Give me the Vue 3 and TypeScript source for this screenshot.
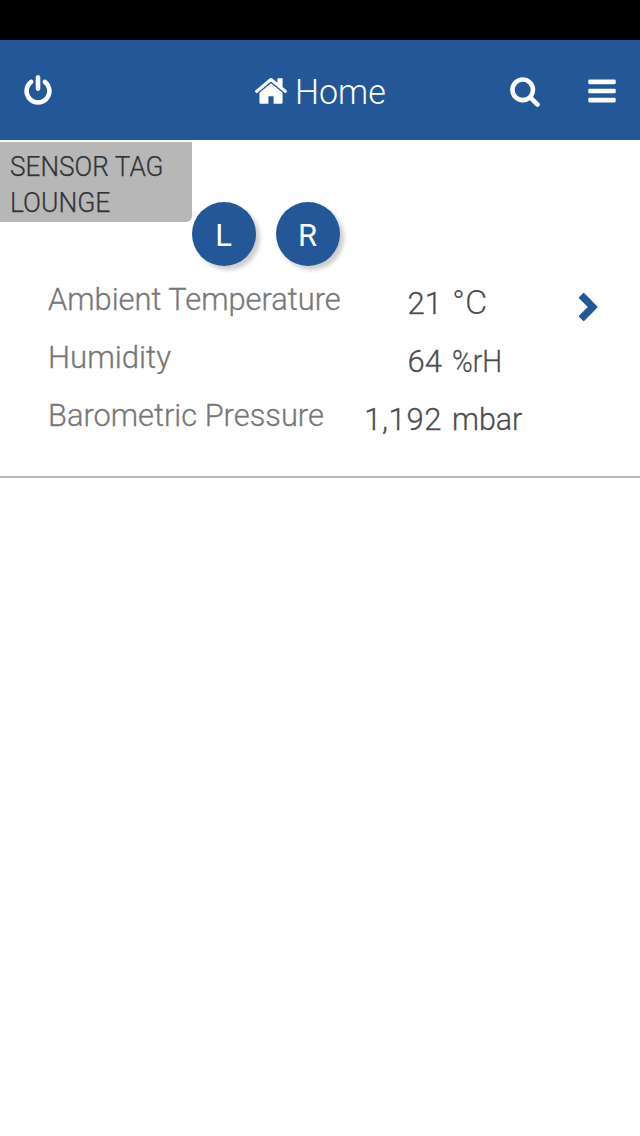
<script setup lang="ts">
interface Reading {
  id: string
  label: string
  value: string
  unit: string
}

const readings: Reading[] = [
  { id: 'temperature', label: 'Ambient Temperature', value: '21', unit: '°C' },
  { id: 'humidity', label: 'Humidity', value: '64', unit: '%rH' },
  { id: 'pressure', label: 'Barometric Pressure', value: '1,192', unit: 'mbar' },
]
const keys: string[] = ['L', 'R']
</script>

<template>
  <div class="screen">
    <div class="statusbar"></div>
    <header class="navbar">
      <svg class="icon power" viewBox="0 0 1792 1792"><path d="M1664 896q0 156-61 298t-164 245-245 164-298 61-298-61-245-164-164-245-61-298q0-182 80.500-343t226.500-270q43-32 95.500-25t83.500 50q32 42 24.500 94.500t-49.500 84.500q-98 74-151.500 181t-53.500 228q0 104 40.500 198.500t109.500 163.500 163.500 109.500 198.500 40.500 198.500-40.500 163.500-109.500 109.500-163.500 40.500-198.500q0-121-53.500-228t-151.500-181q-42-32-49.500-84.500t24.500-94.500q31-43 84-50t95 25q146 109 226.500 270t80.500 343zm-640-768v640q0 52-38 90t-90 38-90-38-38-90v-640q0-52 38-90t90-38 90 38 38 90z" /></svg>
      <h1 class="title">
        <svg class="house" viewBox="0 0 1792 1792"><path d="M1472 992v480q0 26-19 45t-45 19h-384v-384h-256v384h-384q-26 0-45-19t-19-45v-480q0-1 .5-3t.5-3l575-474 575 474q1 2 1 6zm223-69l-62 74q-8 9-21 11h-3q-13 0-21-7l-692-577-692 577q-12 8-24 7-13-2-21-11l-62-74q-8-10-7-23.500t11-21.500l719-599q32-26 76-26t76 26l244 204v-195q0-14 9-23t23-9h192q14 0 23 9t9 23v408l219 182q10 8 11 21.500t-7 23.500z" /></svg>
        <span>Home</span>
      </h1>
      <div class="actions">
        <svg class="icon" viewBox="0 0 1792 1792"><path d="M1216 832q0-185-131.500-316.500t-316.500-131.500-316.500 131.500-131.500 316.500 131.500 316.500 316.500 131.500 316.500-131.500 131.500-316.500zm512 832q0 52-38 90t-90 38q-54 0-90-38l-343-342q-179 124-399 124-143 0-273.500-55.500t-225-150-150-225-55.500-273.500 55.500-273.500 150-225 225-150 273.500-55.500 273.500 55.500 225 150 150 225 55.500 273.500q0 220-124 399l343 343q37 37 37 90z" /></svg>
        <svg class="icon" viewBox="0 0 1792 1792">
          <rect x="128" y="256" width="1536" height="256" rx="64" />
          <rect x="128" y="768" width="1536" height="256" rx="64" />
          <rect x="128" y="1280" width="1536" height="256" rx="64" />
        </svg>
      </div>
    </header>
    <main class="card">
      <div class="top">
        <div class="tag"><span class="sensor">SENSOR TAG</span><span class="lounge">LOUNGE</span></div>
        <div class="keys">
          <span v-for="key in keys" :key="key" class="key">{{ key }}</span>
        </div>
      </div>
      <div class="body">
        <div class="readings">
          <div v-for="r in readings" :key="r.id" class="row" :class="r.id">
            <span class="label"><span class="fit">{{ r.label }}</span></span>
            <span class="value">{{ r.value }}</span>
            <span class="unit"><span class="fit">{{ r.unit }}</span></span>
          </div>
        </div>
        <svg class="chevron" viewBox="0 0 20 30"><path d="M1.200 5 5 1.200Q5.700 .5 6.400 1.200L19.200 14.300Q19.900 15 19.200 15.700L6.400 28.800Q5.700 29.500 5 28.800L1.200 25Q.5 24.300 1.200 23.600L9.800 15 1.200 6.400Q.5 5.700 1.200 5Z" /></svg>
      </div>
    </main>
  </div>
</template>

<style>
body {
  background: #fff;
}
</style>

<style scoped>
.screen {
  width: 640px;
  height: 1136px;
  overflow: hidden;
  background: #fff;
  font-family: Roboto, "Liberation Sans", sans-serif;
  font-weight: 300;
}
.statusbar {
  height: 40px;
  background: #000;
}
.navbar {
  box-sizing: border-box;
  height: 100px;
  padding: 0 22px;
  display: grid;
  grid-template-columns: 231px 1fr 109px;
  align-items: start;
  background: #235797;
  color: #fff;
}
.icon {
  width: 32px;
  height: 32px;
  fill: #fff;
  overflow: visible;
}
.power {
  margin-top: 35px;
}
.title {
  margin: 33px 0 0;
  display: flex;
  font-size: 35px;
  line-height: 40px;
  font-weight: 300;
}
.title span {
  margin-left: 6px;
  transform: scaleX(0.97);
  transform-origin: left;
}
.house {
  width: 36px;
  height: 36px;
  fill: #fff;
}
.actions {
  margin-top: 35px;
  display: flex;
  justify-content: space-between;
}
.card {
  box-sizing: border-box;
  height: 338px;
  padding-top: 2px;
  border-bottom: 2px solid #b7b7b7;
}
.top {
  display: flex;
  height: 124px;
}
.tag {
  box-sizing: border-box;
  display: flex;
  flex-direction: column;
  align-items: flex-start;
  width: 192px;
  height: 80px;
  padding: 7px 0 0 10px;
  border-bottom-right-radius: 6px;
  background: #b7b7b7;
  color: #333;
  font-size: 28px;
  line-height: 36px;
  -webkit-text-stroke: 0.25px currentColor;
}
.sensor {
  transform: scaleX(0.935);
  transform-origin: left;
}
.lounge {
  transform: scaleX(0.945);
  transform-origin: left;
}
.keys {
  display: flex;
  gap: 20px;
  padding-top: 60px;
}
.key {
  width: 64px;
  height: 64px;
  border-radius: 50%;
  background: #235797;
  box-shadow: 4px 4px 4px rgba(0, 0, 0, 0.2);
  color: #fff;
  font-size: 31px;
  font-weight: 400;
  line-height: 67px;
  text-align: center;
  text-indent: -1px;
}
.body {
  display: flex;
  padding: 4px 0 0 48px;
}
.readings {
  width: 530px;
}
.row {
  display: grid;
  grid-template-columns: 306px 88px 1fr;
  height: 58px;
  font-size: 31px;
  line-height: 60px;
  white-space: nowrap;
  -webkit-text-stroke: 0.3px currentColor;
}
.fit {
  display: inline-block;
  transform-origin: left;
}
.label {
  color: #777;
}
.label .fit {
  transform: scaleX(0.994);
}
.humidity .label .fit {
  transform: scaleX(1.005);
}
.value,
.unit {
  margin-top: 4px;
  color: #4d4d4d;
}
.value {
  text-align: right;
}
.unit {
  padding-left: 10px;
}
.temperature .unit {
  margin-top: 3px;
  font-size: 33px;
  -webkit-text-stroke-width: 0;
}
.temperature .unit .fit {
  transform: scaleX(1.04);
}
.humidity .unit .fit {
  transform: scaleX(0.905);
}
.pressure .value {
  letter-spacing: 0.6px;
}
.pressure .unit .fit {
  transform: scaleX(0.98);
}
.chevron {
  width: 20px;
  height: 30px;
  margin-top: 22px;
  fill: #235797;
}
</style>
